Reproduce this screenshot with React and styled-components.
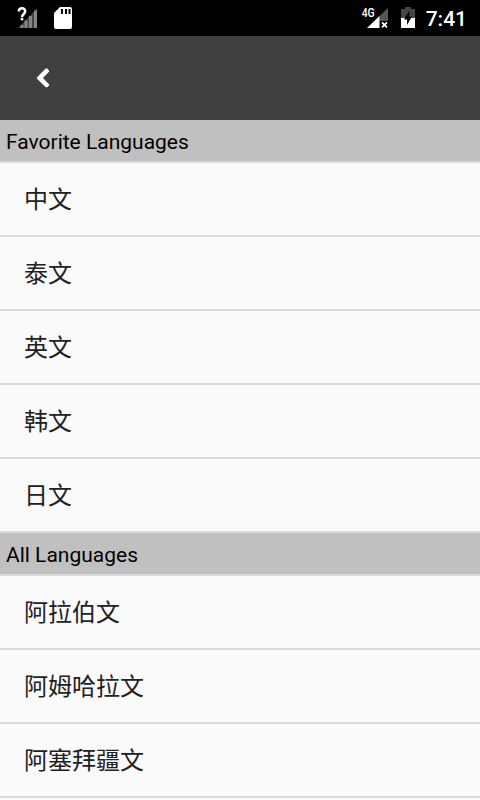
import React from "react";
import styled, { createGlobalStyle } from "styled-components";

const GlobalStyle = createGlobalStyle`
  * { box-sizing: border-box; }
  body { margin: 0; background: #fafafa; overflow: hidden; }
`;

const Screen = styled.main`
  display: flex;
  flex-direction: column;
  width: 480px;
  height: 800px;
  overflow: hidden;
  background: #fafafa;
  font-family: Roboto, "Noto Sans CJK SC", sans-serif;
`;

const StatusBar = styled.header`
  display: flex;
  flex: none;
  justify-content: space-between;
  height: 36px;
  padding: 0 13px 0 14px;
  background: #000;
  color: #fff;
`;

const StatusGroup = styled.div`
  display: flex;
  align-items: flex-start;
  gap: ${({ $gap }) => $gap}px;
`;

const StatusIcon = styled.svg`
  display: block;
  flex: none;
  height: 36px;
`;

const NetworkLabel = styled.text`
  fill: #fff;
  font-family: Roboto, sans-serif;
  font-size: 13px;
  font-weight: 500;
`;

const Clock = styled.time`
  font-size: 21px;
  font-weight: 500;
  line-height: 38px;
`;

const AppBar = styled.nav`
  display: flex;
  flex: none;
  align-items: center;
  height: 84px;
  padding-left: 36px;
  background: #404040;
`;

const BackButton = styled.button`
  display: flex;
  padding: 0;
  border: 0;
  background: none;
`;

const SectionTitle = styled.h2`
  flex: none;
  height: 43px;
  margin: 0;
  padding: 1px 0 0 6px;
  border-bottom: 2px solid #dadada;
  background: #c0c0c0;
  color: #000;
  font-size: 21px;
  font-weight: 400;
  line-height: 43px;
`;

const LanguageList = styled.ul`
  flex: none;
  margin: 0;
  padding: 0;
  list-style: none;
`;

const LanguageRow = styled.li`
  height: 74px;
  padding: 1px 0 0 24px;
  border-bottom: 2px solid #dadada;
  color: #212121;
  font-size: 24px;
  line-height: 72px;
`;

const sections = [
  { title: "Favorite Languages", languages: ["中文", "泰文", "英文", "韩文", "日文"] },
  { title: "All Languages", languages: ["阿拉伯文", "阿姆哈拉文", "阿塞拜疆文"] },
];

const UnknownSignalIcon = () => (
  <StatusIcon width="26" viewBox="14 0 26 36">
    <path d="M18 28L37 8.500V28Z" fill="#444" />
    <path d="M22 25V28M26 20.500V28M30.500 16V28M35.500 10.500V28" stroke="#858585" strokeWidth="3" />
    <path d="M18.800 11.500C18.800 7.200 25.200 7.200 25.200 11.300C25.200 14 22 14 22 17.200" fill="none" stroke="#fff" strokeWidth="2.500" />
    <rect x="20.700" y="18" width="2.600" height="2.400" fill="#fff" />
  </StatusIcon>
);

const StorageIcon = () => (
  <StatusIcon width="24" viewBox="50 0 24 36">
    <path d="M60 7H70Q72 7 72 9V27Q72 29 70 29H56Q54 29 54 27V13Z" fill="#fff" />
    <path d="M62 9V14M66 9V14M69.500 9V14" stroke="#000" strokeWidth="2" />
  </StatusIcon>
);

const MobileSignalIcon = () => (
  <StatusIcon width="30" viewBox="360 0 30 36">
    <path d="M379.500 16L388 8V21H379.500Z" fill="#555" />
    <path d="M367 28L379.500 16V28Z" fill="#fff" />
    <path d="M382 22.300L387 27.300M387 22.300L382 27.300" stroke="#fff" strokeWidth="1.800" />
    <NetworkLabel x="361.700" y="17" textLength="13" lengthAdjust="spacingAndGlyphs">4G</NetworkLabel>
  </StatusIcon>
);

const BatteryIcon = () => (
  <StatusIcon width="18" viewBox="399 0 18 36">
    <path d="M401 9H405V7H411V9H415V18H401Z" fill="#444" />
    <path d="M401 18H415V28H401Z" fill="#fff" />
    <path d="M409.500 10.500L404 19.500H407V25L412 16.500H409Z" fill="#000" />
  </StatusIcon>
);

export default function App() {
  return (
    <Screen>
      <GlobalStyle />
      <StatusBar>
        <StatusGroup $gap={10}>
          <UnknownSignalIcon />
          <StorageIcon />
        </StatusGroup>
        <StatusGroup $gap={9}>
          <MobileSignalIcon />
          <BatteryIcon />
          <Clock>7:41</Clock>
        </StatusGroup>
      </StatusBar>
      <AppBar>
        <BackButton aria-label="Back">
          <svg width="14" height="20" viewBox="0 0 14 20">
            <path d="M9.500 0.800Q10.500 -0.100 11.400 0.800L12.800 2.200Q13.600 3.100 12.800 4L6.900 10L12.800 15.900Q13.600 16.800 12.800 17.700L11.400 19.100Q10.500 19.900 9.500 19.100L1.300 10.900Q0.500 10 1.300 9.100Z" fill="#fff" />
          </svg>
        </BackButton>
      </AppBar>
      {sections.map(({ title, languages }) => (
        <React.Fragment key={title}>
          <SectionTitle>{title}</SectionTitle>
          <LanguageList>
            {languages.map((language) => (
              <LanguageRow key={language} lang="zh-CN">{language}</LanguageRow>
            ))}
          </LanguageList>
        </React.Fragment>
      ))}
    </Screen>
  );
}
